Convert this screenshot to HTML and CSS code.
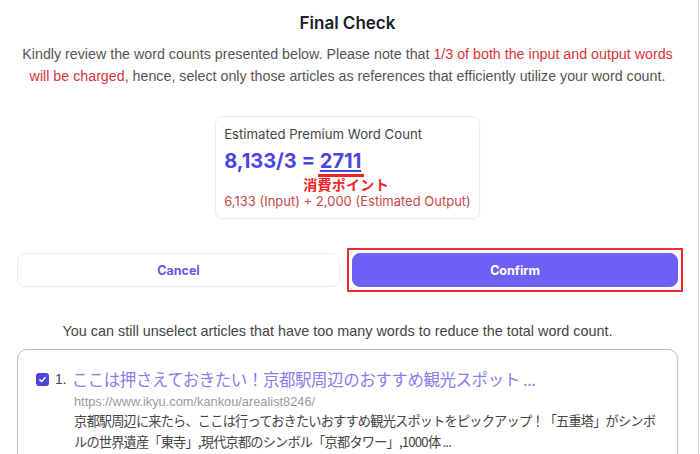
FILE: index.html
```html
<!DOCTYPE html>
<html lang="en">
<head>
<meta charset="UTF-8">
<meta name="viewport" content="width=device-width,initial-scale=1.0">
<title>Final Check</title>
<link rel="stylesheet" href="styles.css">
</head>
<body>
<div class="page">
  <div class="content">
    <h1>Final Check</h1>
    <p class="intro">Kindly review the word counts presented below. Please note that <span class="warn">1/3 of both the input and output words</span> <span class="warn">will be charged</span>, hence, select only those articles as references that efficiently utilize your word count.</p>

    <div class="summary">
      <div class="card">
        <div class="card-label">Estimated Premium Word Count</div>
        <div class="card-total">8,133/3 = <span class="points">2711</span></div>
        <div class="note">消費ポイント</div>
        <div class="card-detail">6,133 (Input) + 2,000 (Estimated Output)</div>
      </div>
    </div>

    <div class="actions">
      <button class="btn btn-cancel">Cancel</button>
      <div class="mark">
        <button class="btn btn-confirm">Confirm</button>
      </div>
    </div>

    <p class="hint">You can still unselect articles that have too many words to reduce the total word count.</p>

    <div class="article">
      <div class="article-head">
        <span class="check"><svg width="9" height="9" viewBox="0 0 10 10"><path d="M2 5.2 4.1 7.2 8 2.8" fill="none" stroke="#fff" stroke-width="1.6" stroke-linecap="round" stroke-linejoin="round"/></svg></span>
        <span class="num">1.</span>
        <a class="article-title" href="#">ここは押さえておきたい！京都駅周辺のおすすめ観光スポット ...</a>
      </div>
      <div class="article-url">https://www.ikyu.com/kankou/arealist8246/</div>
      <div class="article-desc">京都駅周辺に来たら、ここは行っておきたいおすすめ観光スポットをピックアップ！「五重塔」がシンボルの世界遺産「東寺」,現代京都のシンボル「京都タワー」,1000体 ...</div>
    </div>
  </div>
</div>
</body>
</html>
```

FILE: styles.css
```css
html,body{margin:0;padding:0;background:#fff}
body{font-family:"Liberation Sans",Arial,"Noto Sans CJK JP",sans-serif;color:#444;overflow:hidden}
.page{width:698px;height:454px;border-right:1px solid #d4d4d4;overflow:hidden}
.content{width:661px;margin-left:17px}
h1{margin:0;padding-top:12px;font-family:Inter,sans-serif;font-size:17px;line-height:22px;font-weight:600;color:#1c1c28;text-align:center}
.intro{margin:9px -6px 0;font-size:14.25px;line-height:22px;color:#555;text-align:center}
.warn{color:#d8343c}
.summary{display:flex;justify-content:center;margin-top:29px}
.card{font-family:Inter,sans-serif;border:1px solid #ececec;border-radius:8px;padding:7px 8px 8px;box-shadow:0 1px 3px rgba(0,0,0,.04)}
.card-label{font-size:13.2px;line-height:20px;color:#444}
.card-total{font-size:20px;line-height:30px;font-weight:700;color:#4b44e0;margin-top:2px}
.points{text-decoration:underline;text-decoration-thickness:1.5px;text-underline-offset:2px;position:relative}
.points::after{content:"";position:absolute;left:-2px;right:-3px;bottom:-4px;height:3px;background:#f02222}
.note{font-family:"Noto Sans CJK JP",sans-serif;font-size:14px;line-height:16px;font-weight:700;color:#f02222;margin-left:79px;letter-spacing:.3px}
.card-detail{font-size:13px;line-height:18px;color:#c84848}
.actions{display:flex;gap:7px;margin-top:29px;align-items:center}
.btn{height:34px;border-radius:8px;font-family:Inter,sans-serif;font-size:12.5px;font-weight:700;cursor:pointer}
.btn-cancel{flex:0 0 323px;background:#fff;border:1px solid #ececec;color:#6a5ae6}
.mark{flex:1;display:flex;border:2px solid #ee2b33;padding:3px;margin-right:-5px}
.btn-confirm{flex:1;background:#6e5ff5;border:1px solid #6e5ff5;color:#fff}
.hint{margin:30px 20px 0 0;font-size:14.4px;line-height:18px;color:#444;text-align:center}
.article{margin-top:9px;border:1px solid #b9b2e6;border-radius:10px;padding:16px 18px 20px}
.article-head{display:flex;align-items:center;gap:5px;height:26px}
.check{width:13px;height:13px;border-radius:3px;background:#4e44d8;display:flex;align-items:center;justify-content:center}
.num{font-size:14px;color:#444;margin-left:1px}
.article-title{font-family:"Noto Sans CJK JP",sans-serif;font-size:16.5px;color:#8a7cf0;text-decoration:none;white-space:nowrap;letter-spacing:-.45px}
.article-url{margin:2px 0 0 38px;font-size:12.8px;line-height:16px;color:#9a9a9a}
.article-desc{margin:0 0 0 38px;font-family:"Noto Sans CJK JP",sans-serif;font-size:13.2px;line-height:21px;color:#444;letter-spacing:-.8px}
```
